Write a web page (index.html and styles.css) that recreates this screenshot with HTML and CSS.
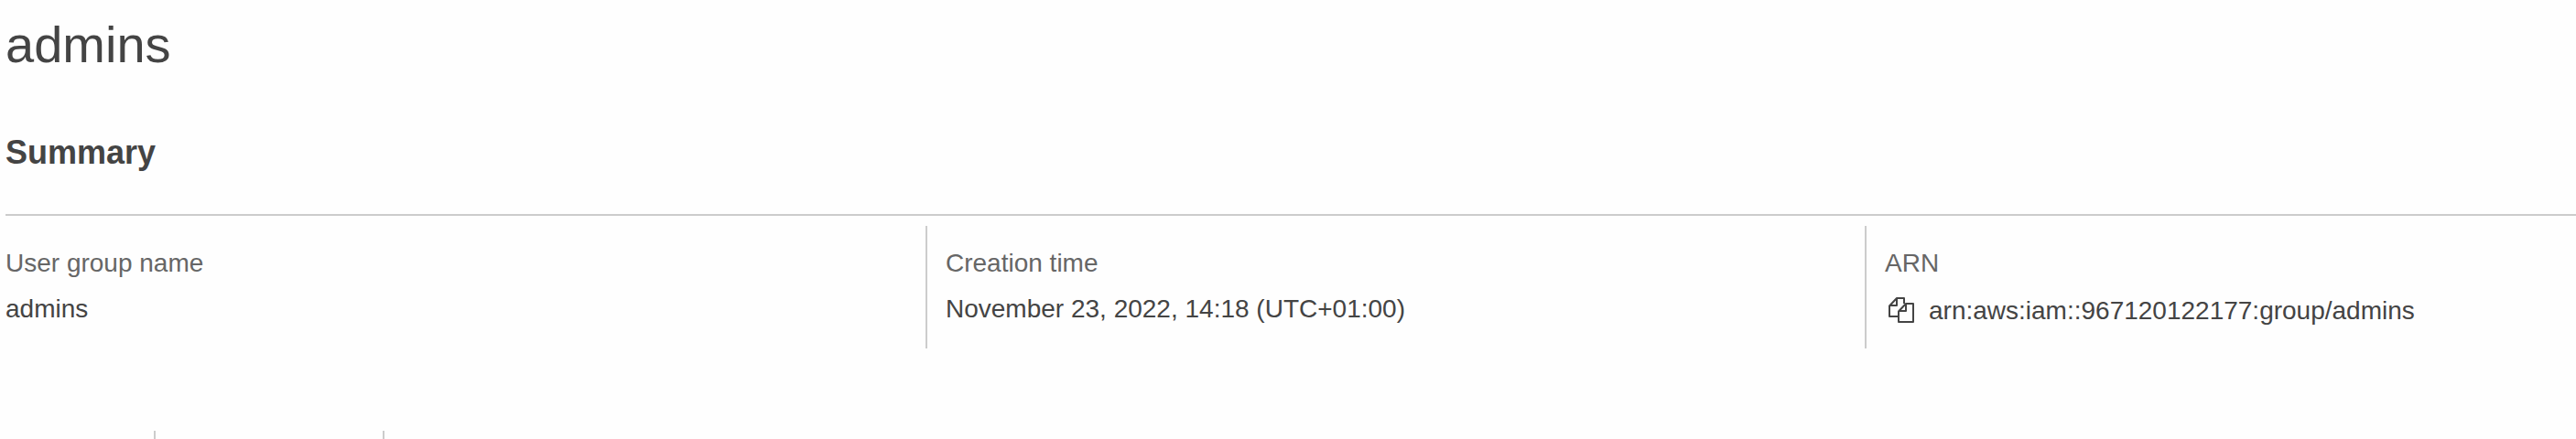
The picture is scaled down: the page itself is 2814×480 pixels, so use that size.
FILE: index.html
```html
<!DOCTYPE html>
<html lang="en">
<head>
<meta charset="utf-8">
<title>admins</title>
<link rel="stylesheet" href="styles.css">
</head>
<body>
<main class="page">
  <h1 class="title">admins</h1>
  <section class="summary">
    <h2 class="heading">Summary</h2>
    <div class="columns">
      <div class="column">
        <div class="label">User group name</div>
        <div class="value">admins</div>
      </div>
      <div class="column">
        <div class="label">Creation time</div>
        <div class="value">November 23, 2022, 14:18 (UTC+01:00)</div>
      </div>
      <div class="column">
        <div class="label">ARN</div>
        <div class="value value-copy">
          <svg class="copy" viewBox="0 0 28 28" aria-hidden="true">
            <path d="M11 21H1V9.5L9 1H17V7M9 1V9H1"/>
            <path d="M11 15.5L19 7H27V27H11ZM19 7V15H11"/>
          </svg>
          <span>arn:aws:iam::967120122177:group/admins</span>
        </div>
      </div>
    </div>
  </section>
  <div class="tabs">
    <div class="tab tab-first"></div>
    <div class="tab"></div>
  </div>
</main>
</body>
</html>
```
FILE: styles.css
```css
html,
body {
  height: 480px;
  overflow: hidden;
}
body {
  margin: 0;
  background: #fefefe;
  color: #444;
  font: 28px/44px "Liberation Sans", Arial, sans-serif;
}
.page {
  box-sizing: border-box;
  height: 480px;
  padding: 14px 0 0 6px;
  overflow: hidden;
}
.title {
  margin: 0 0 61px;
  font-size: 56px;
  font-weight: 400;
  line-height: 70px;
}
.heading {
  margin: 0;
  padding-bottom: 45px;
  border-bottom: 2px solid #ccc;
  font-size: 36px;
  line-height: 44px;
}
.columns {
  display: grid;
  grid-template-columns: 1005px 1026px 1fr;
  margin-top: 11px;
}
.column {
  box-sizing: border-box;
  height: 134px;
  padding-top: 19px;
}
.column + .column {
  padding-left: 20px;
  border-left: 2px solid #ccc;
}
.label {
  margin-bottom: 6px;
  color: #666;
}
.value-copy {
  display: flex;
  align-items: flex-start;
  gap: 16px;
  padding: 2px 0 0 4px;
}
.copy {
  width: 28px;
  height: 28px;
  margin-top: 7px;
  fill: none;
  stroke: #444;
  stroke-width: 2;
  stroke-linejoin: round;
}
.tabs {
  display: flex;
  height: 9px;
  margin-top: 90px;
}
.tab {
  box-sizing: border-box;
  width: 250px;
  border-right: 2px solid #ccc;
}
.tab-first {
  width: 164px;
}
```
